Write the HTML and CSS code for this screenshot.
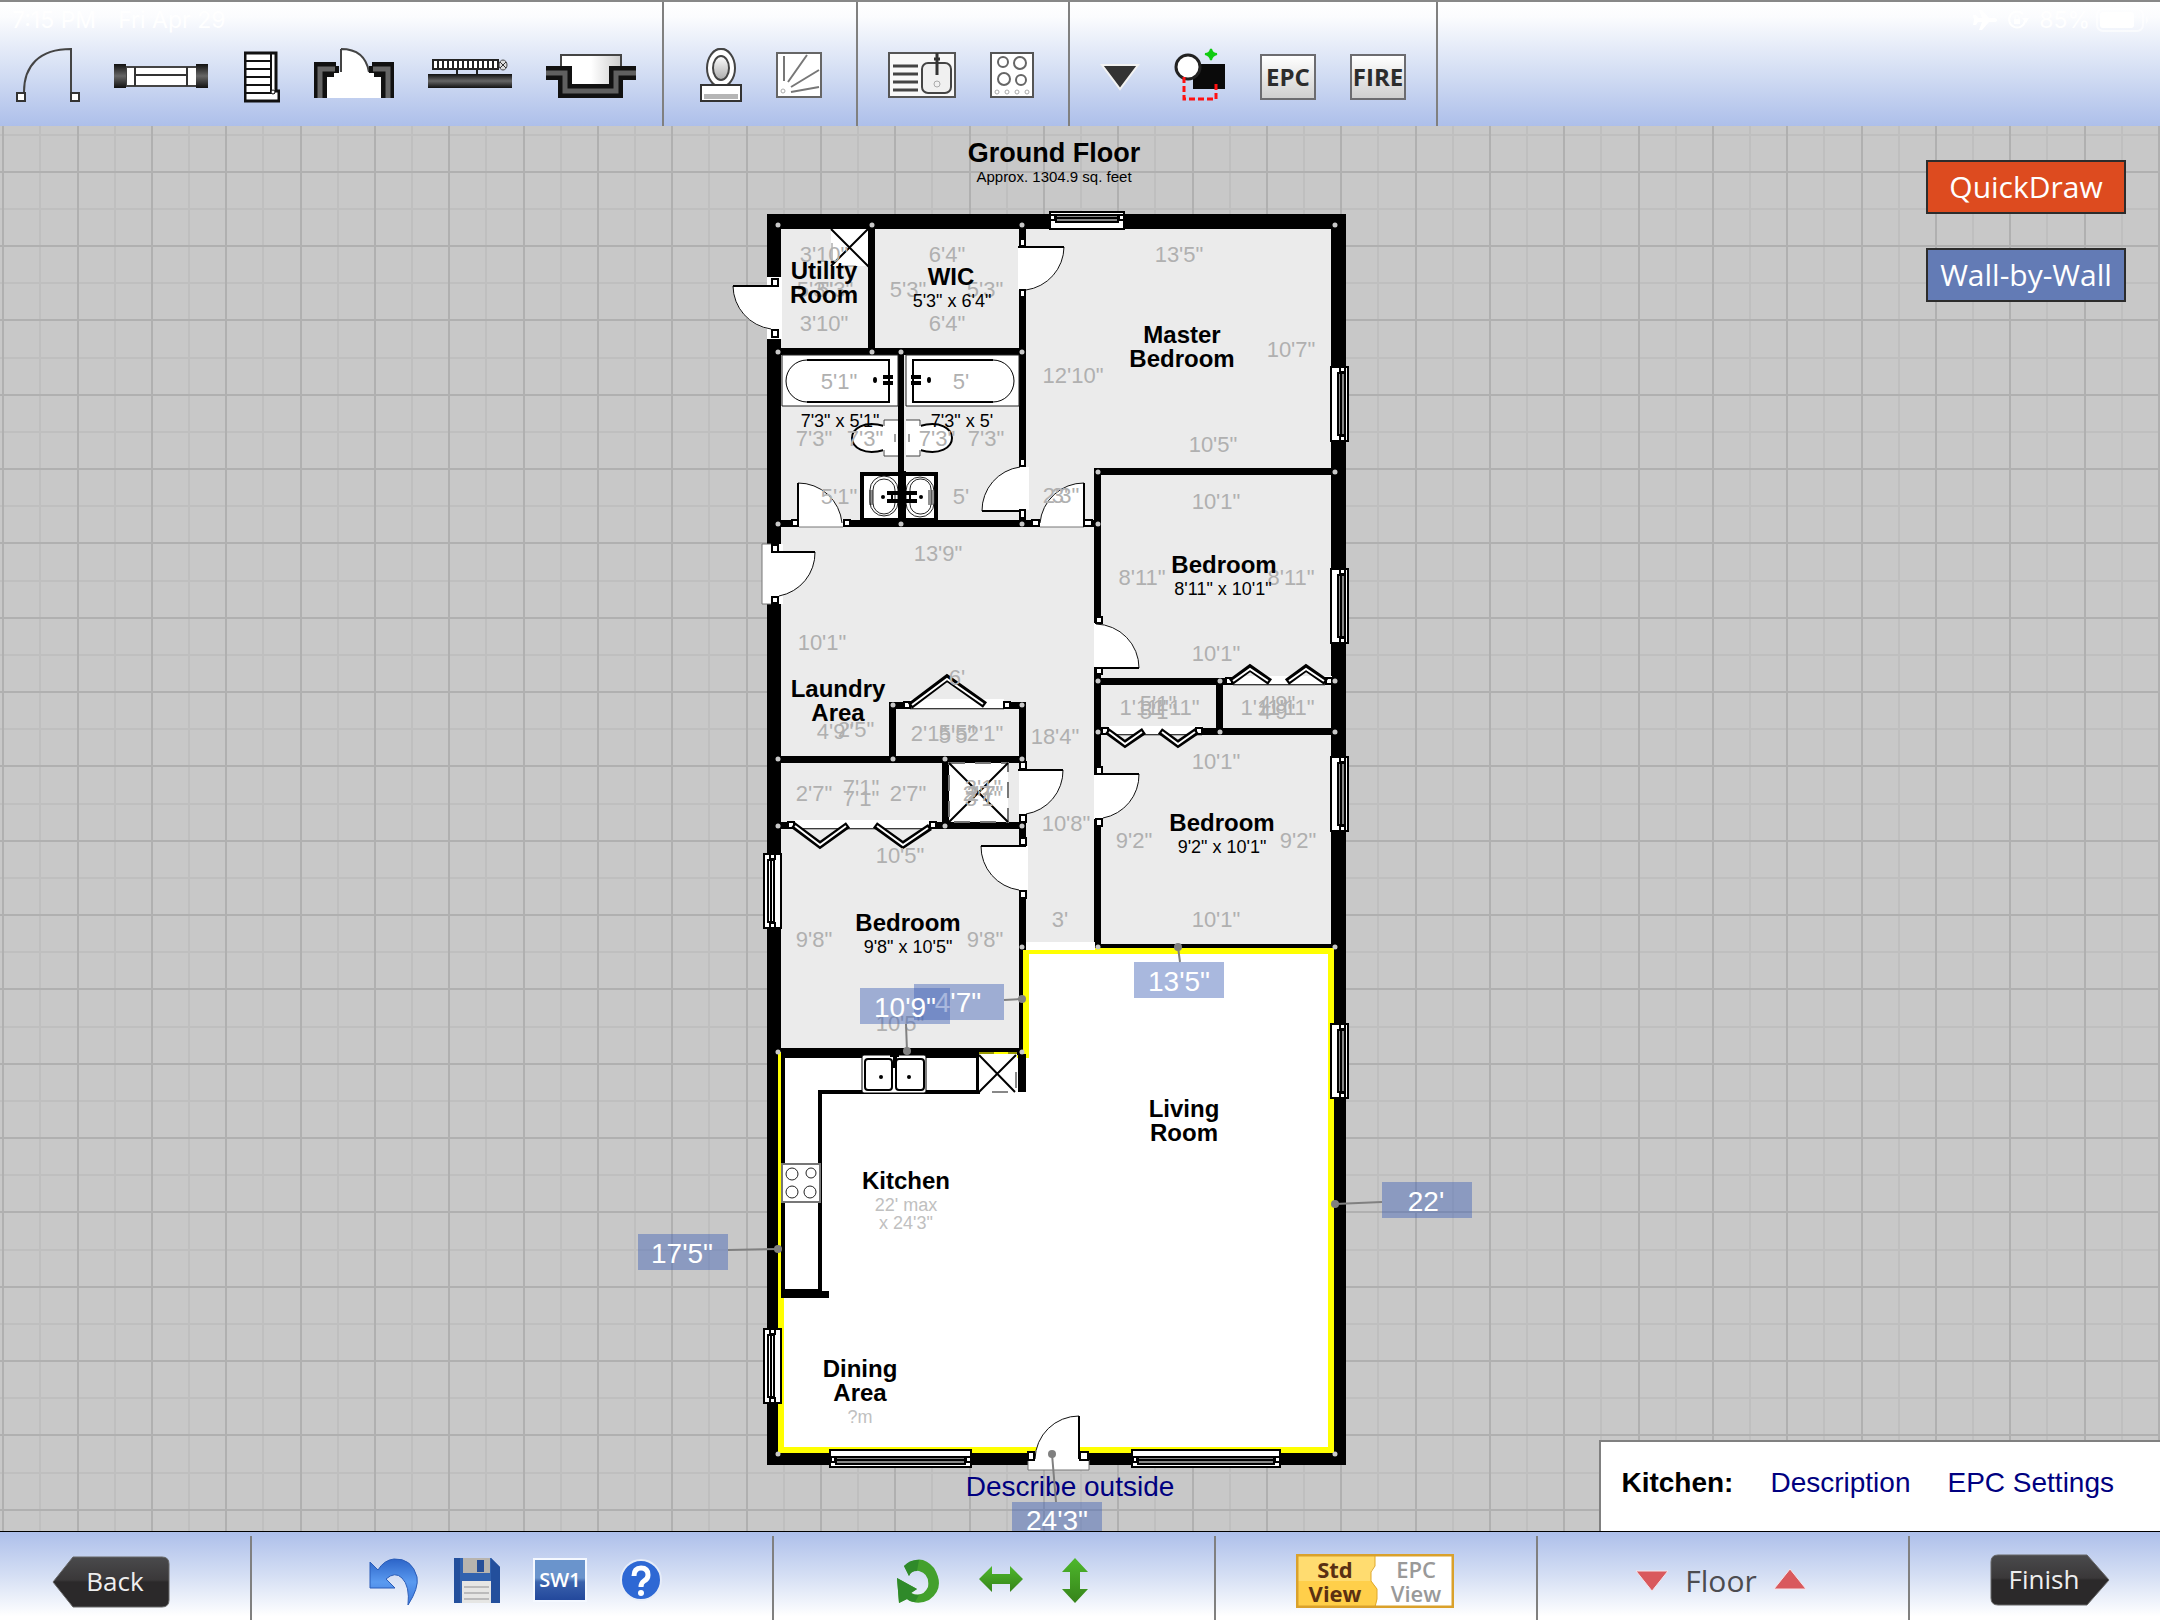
FILE: index.html
```html
<!DOCTYPE html>
<html lang="en">
<head>
<meta charset="utf-8">
<title>Ground Floor</title>
<link rel="stylesheet" href="styles.css">
</head>
<body>
<div class="app">
  <header class="topbar">
    <div class="status">
      <span>7:15 PM</span><span class="date">Fri Apr 29</span>
      <svg class="airplane" width="24" height="20" viewBox="0 0 24 20"><path fill="#fff" d="M24 10q0 2-3 2h-5l-7 8H6l3-8H5l-2 3H0l1-5-1-5h3l2 3h4L6 0h3l7 8h5q3 0 3 2z"/></svg>
      <svg width="22" height="20" viewBox="0 0 22 20"><path fill="none" stroke="#fff" stroke-width="2" d="M16 4a8 8 0 1 0 2 7"/><path fill="#fff" d="M15 8h7l-3 5zM7 9h6v5H7z"/><path fill="none" stroke="#fff" stroke-width="1" d="M8 9V7a2 2 0 0 1 4 0v2"/></svg>
      <span>85%</span>
      <svg class="battery" width="54" height="24" viewBox="0 0 54 24"><rect x="1" y="1" width="46" height="22" rx="6" fill="none" stroke="#fff" stroke-opacity=".6" stroke-width="2"/><rect x="4" y="4" width="34" height="16" rx="3" fill="#fff"/><path d="M50 8q4 4 0 8z" fill="#fff" fill-opacity=".6"/></svg>
    </div>
    <div class="tools openings">
      <button aria-label="Door"><svg width="64" height="56" viewBox="16 48 64 56"><path d="M24 92C24 66 39 49 71 49V93" fill="none" stroke="#444" stroke-width="2"/><path d="M17 93h8v8h-8zM71 93h8v8h-8z" fill="#fff" stroke="#333" stroke-width="2"/></svg></button>
      <button aria-label="Window"><svg width="96" height="56" viewBox="114 48 96 56"><defs><linearGradient id="gd" x1="0" y1="0" x2="0" y2="1"><stop offset="0" stop-color="#111"/><stop offset=".5" stop-color="#666"/><stop offset="1" stop-color="#111"/></linearGradient></defs><path d="M126 67h72v19h-72z" fill="#fff" stroke="#444" stroke-width="2"/><path d="M135 67v19M187 67v19M135 75h52" stroke="#333" stroke-width="2"/><path d="M114 64h12v24h-12zM196 64h12v24h-12z" fill="url(#gd)"/></svg></button>
      <button aria-label="Stairs"><svg width="36" height="56" viewBox="244 48 36 56"><path d="M245 53h31v38h3v10h-34z" fill="#fff" stroke="#111" stroke-width="3"/><path d="M245 61h26M245 69h26M245 77h26M245 85h26M245 93h27" stroke="#111" stroke-width="2"/><path d="M271 53v40h4" stroke="#111" stroke-width="2" fill="none"/><circle cx="273" cy="92" r="2" fill="#fff" stroke="#111"/></svg></button>
      <button aria-label="Doorway"><svg width="80" height="56" viewBox="314 48 80 56"><path d="M327 98V75l14-4V50q24 0 27 22l14 3v23z" fill="#fff"/><path d="M341 72V49M341 49q24 0 28 23" fill="none" stroke="#444" stroke-width="2"/><path d="M314 98V62h22v4h3v7h-5v4h-7v21zM394 98V62h-22v4h-3v7h5v4h7v21z" fill="#111"/><path d="M320 98V69h15M388 98V69h-15" fill="none" stroke="#666" stroke-width="5"/></svg></button>
      <button aria-label="Railing"><svg width="84" height="56" viewBox="428 48 84 56"><path d="M433 60h65v9h-65z" fill="#fff" stroke="#222" stroke-width="2"/><path d="M438 60v9M443 60v9M448 60v9M453 60v9M458 60v9M463 60v9M468 60v9M473 60v9M478 60v9M483 60v9M488 60v9M493 60v9M457 69v5M477 69v5" stroke="#222" stroke-width="2"/><ellipse cx="503" cy="65" rx="4" ry="5" fill="#ddd" stroke="#444"/><path d="M500 62l6 6m0-6l-6 6" stroke="#333"/><path d="M428 74h84v14h-84z" fill="url(#gd)"/></svg></button>
      <button aria-label="Bay"><svg width="90" height="56" viewBox="546 48 90 56"><defs><linearGradient id="gb"><stop offset=".5" stop-color="#fff"/><stop offset="1" stop-color="#ccc"/></linearGradient></defs><path d="M561 55h60v30h-60z" fill="url(#gb)" stroke="#444" stroke-width="2"/><path d="M546 73h19v18h51V73h20" fill="none" stroke="#111" stroke-width="14"/><path d="M546 73h19v18h51V73h20" fill="none" stroke="#606060" stroke-width="5"/></svg></button>
    </div>
    <div class="tools">
      <button aria-label="Toilet"><svg width="42" height="56" viewBox="700 48 42 56"><defs><linearGradient id="gt" x1="0" y1="0" x2="0" y2="1"><stop offset="0" stop-color="#fff"/><stop offset="1" stop-color="#aaa"/></linearGradient></defs><path d="M713 85q-9-36 8-36t8 36z" fill="#fff" stroke="#444" stroke-width="2"/><ellipse cx="721" cy="68" rx="14" ry="19" fill="#fff" stroke="#444" stroke-width="2"/><ellipse cx="721" cy="68" rx="8" ry="12" fill="url(#gt)" stroke="#444" stroke-width="2"/><path d="M701 85h40v16h-40z" fill="#fff" stroke="#333" stroke-width="2"/><path d="M704 94h34v5h-34z" fill="#b5b5b5"/></svg></button>
      <button aria-label="Shower"><svg width="46" height="56" viewBox="776 48 46 56"><path d="M777 53h44v44h-44z" fill="#fff" stroke="#666" stroke-width="2"/><path d="M784 81V56M788 82l19-27M791 87l28-17M791 92l28-5" stroke="#777" stroke-width="2"/><circle cx="783" cy="91" r="2" fill="none" stroke="#aaa"/></svg></button>
    </div>
    <div class="tools">
      <button aria-label="Sink"><svg width="68" height="56" viewBox="888 48 68 56"><path d="M889 53h66v44h-66z" fill="#f8f8f8" stroke="#555" stroke-width="2"/><path d="M893 66h25M893 74h25M893 82h25M893 90h25" stroke="#444" stroke-width="3"/><rect x="922" y="63" width="29" height="30" rx="6" fill="#f0f0f0" stroke="#444" stroke-width="2"/><path d="M937 53v22M934 59h6" stroke="#333" stroke-width="3"/><circle cx="937" cy="84" r="3" fill="none" stroke="#aaa"/></svg></button>
      <button aria-label="Hob"><svg width="44" height="56" viewBox="990 48 44 56"><path d="M991 53h42v44h-42z" fill="#fff" stroke="#555" stroke-width="2"/><g fill="none" stroke="#666" stroke-width="2"><circle cx="1003" cy="62" r="5"/><circle cx="1020" cy="63" r="6"/><circle cx="1004" cy="79" r="6"/><circle cx="1021" cy="80" r="5"/></g><g fill="none" stroke="#aaa"><circle cx="997" cy="92" r="2"/><circle cx="1007" cy="92" r="2"/><circle cx="1017" cy="92" r="2"/><circle cx="1027" cy="92" r="2"/></g></svg></button>
    </div>
    <div class="tools">
      <button aria-label="More"><svg width="40" height="56" viewBox="1100 48 40 56"><path d="M1102 65h36l-18 24z" fill="#333" stroke="#f2f2f2" stroke-width="2"/></svg></button>
      <button aria-label="Add shape"><svg width="52" height="56" viewBox="1174 48 52 56"><path d="M1193 64h32v25h-32z" fill="#0a0a0a"/><circle cx="1188" cy="67" r="12" fill="#fff" stroke="#222" stroke-width="3"/><path d="M1184 77v22h32V84" fill="none" stroke="#f11" stroke-width="3" stroke-dasharray="6 3"/><path d="M1211 49q1 5 6 5-5 1-6 6-1-5-6-6 5 0 6-5z" fill="#1c1" stroke="#1c1" stroke-width="2"/></svg></button>
      <button class="badge">EPC</button>
      <button class="badge">FIRE</button>
    </div>
  </header>

  <main class="canvas">
    <svg class="plan" width="900" height="1405" viewBox="600 126 900 1405">
      <defs>
        <g id="win"><path d="M1 1h17v74H1z" fill="#fff" stroke="#000" stroke-width="2"/><path d="M7 6h9v64H7z" fill="#000"/><path d="M9 8h1v60H9zM12 8h2v60h-2z" fill="#888"/><path d="M10 1h5v5h-5zM10 70h5v5h-5z" fill="#fff" stroke="#000" stroke-width="2"/></g>
        <g id="winl"><path d="M1 1h17v74H1z" fill="#fff" stroke="#000" stroke-width="2"/><path d="M4 6h8v64H4z" fill="#000"/><path d="M6 8h1v60H6zM9 8h1v60H9z" fill="#fff"/><path d="M7 1h5v5H7zM7 70h5v5H7z" fill="#fff" stroke="#000" stroke-width="2"/></g>
      </defs>
      <text class="title" x="1054" y="162">Ground Floor</text>
      <text class="area" x="1054" y="182">Approx. 1304.9 sq. feet</text>

      <path class="wall" d="M767 214h579v1251H767z"/>
      <path class="room" d="M781 229h550v722H1026v102H781z"/>
      <path d="M1026 951h305v499H781V1055h245z" fill="#fff" stroke="#ff0" stroke-width="6"/>

      <g class="wall">
        <path d="M868 229h7v122h-7zM781 348h240v7H781zM898 351h6v171h-6zM1019 229h7v298h-7zM781 520h318v7H781z"/>
        <path d="M1094 468h237v7h-237zM1094 468h7v480h-7zM1094 678h237v7h-237zM1216 678h7v57h-7zM1094 728h237v7h-237zM1097 944h234v4h-234z"/>
        <path d="M889 702h137v7H889zM889 702h7v58h-7zM1019 702h7v350h-7zM781 756h245v7H781zM942 756h7v73h-7zM781 822h245v7H781zM781 1048h245v7H781z"/>
      </g>
      <path d="M778 1055h2v245h-2zM1023 950h6v108h-6z" fill="#ff0"/>
      <path d="M1019 950h4v102h-4z" class="wall"/>
      <path d="M1026 942h69v8h-69z" fill="#fff"/>

      <!-- kitchen counter -->
      <path d="M783 1056h195v36H820v199H783z" fill="#fff" stroke="#000" stroke-width="4"/>
      <path class="wall" d="M781 1290h41v1h7v7h-48zM1018 1054h8v38h-8zM781 1050h198v6H781z"/>
      <path d="M979 1054h38v38h-38z" fill="#fff"/><path d="M979 1053h38" stroke="#990" stroke-width="2"/><path d="M994 1053h14" stroke="#ff0" stroke-width="2"/>
      <path d="M979 1055l36 37M1016 1055l-37 37M978 1055v39" class="ln"/>
      <path d="M992 1092h16M1016 1072v16" stroke="#888" stroke-width="2"/>
      <path d="M782 1164h38v38h-38z" fill="#fff" stroke="#777" stroke-width="2"/>
      <g class="thin"><circle cx="792" cy="1174" r="6"/><circle cx="811" cy="1173" r="5"/><circle cx="792" cy="1192" r="6"/><circle cx="810" cy="1192" r="6"/></g>
      <rect x="862" y="1055" width="64" height="38" rx="2" fill="#fff" stroke="#000"/>
      <g fill="#fff" stroke="#000" stroke-width="2"><rect x="865" y="1059" width="27" height="31" rx="3"/><rect x="896" y="1059" width="28" height="31" rx="3"/></g>
      <path d="M893 1055h4v13h-4zM890 1055h9v2h-9z"/><circle cx="881" cy="1077" r="2"/><circle cx="909" cy="1077" r="2"/>

      <!-- hatches -->
      <path d="M831 229h37v37h-37z" fill="#fff"/><path d="M831 229l38 38M868 229l-37 37" class="ln"/>
      <path d="M832 243v18M842 266h14" stroke="#888"/>
      <path d="M949 763h59v59h-59z" fill="#fff" stroke="#777" stroke-width="2" stroke-dasharray="16 10"/><path d="M949 763l59 59M1008 763l-59 59" class="ln"/>

      <!-- bathroom fittings -->
      <g class="thin"><path d="M782 355h116v51H782zM906 355h113v51H906z"/></g>
      <g fill="#fff" stroke="#000" stroke-width="2"><path d="M889 360v42h-82a21 21 0 0 1 0-42z" stroke-width="1"/><path d="M807 360h82v42h-82" fill="none"/><path d="M913 360v42h80a21 21 0 0 0 0-42z" stroke-width="1"/><path d="M993 360h-80v42h80" fill="none"/></g>
      <path d="M883 375h10v4h-10zM883 381h10v4h-10zM911 375h10v4h-10zM911 381h10v4h-10z"/>
      <ellipse cx="875" cy="380" rx="2" ry="3"/><ellipse cx="929" cy="380" rx="2" ry="3"/>
      <path d="M884 426c-20-6-32 3-32 12s12 18 32 12z" fill="#fff" stroke="#000" stroke-width="2"/><path d="M920 426c20-6 32 3 32 12s-12 18-32 12z" fill="#fff" stroke="#000" stroke-width="2"/>
      <path d="M883 420h15v36h-15zM906 420h15v36h-15z" fill="#fff"/><path d="M898 420h-14v6M884 450v6h14M906 420h14v6M920 450v6h-14M895 434v8M909 434v8" stroke="#444" fill="none"/>
      <path d="M860 472h78v48h-78z"/><path d="M864 476h34v42h-34zM904 476h30v42h-30z" fill="#fff"/>
      <g class="thin"><rect x="870" y="476" width="28" height="40" rx="14"/><rect x="873" y="479" width="22" height="35" rx="11"/><rect x="906" y="477" width="28" height="40" rx="14"/><rect x="910" y="479" width="21" height="35" rx="10"/><path d="M870 490v15M872 490v15M929 490v15M932 490v15"/></g>
      <path class="wall" d="M898 471h8v50h-8z"/><circle cx="883" cy="497" r="2"/><circle cx="921" cy="497" r="2"/><path d="M887 491h30v4h-30zM887 499h30v4h-30z"/><path d="M891 491h2v12h-2zM909 491h2v12h-2z"/>

      <!-- doors -->
      <g fill="#fff">
        <path d="M767 277h15v62h-15zM762 544h21v60h-21zM1018 246h8v44h-8zM1019 467h10v43h-10zM799 519h44v8h-44zM1040 519h44v8h-44zM1019 770h8v44h-8zM1019 846h9v44h-9zM1094 623h8v45h-8zM1094 774h8v44h-8z"/>
        <path d="M910 699h94v9h-94zM794 820h136v8H794zM1233 676h99v8h-99zM1108 726h94v8h-94zM1028 1451h61v19h-61z"/>
        <path d="M778 286h-45a44 44 0 0 0 45 44zM1019 247h45a44 44 0 0 1-45 44zM1020 511h-38a44 44 0 0 1 44-44v44zM798 523v-40a44 44 0 0 1 44 40zM1084 523v-40a44 44 0 0 0-44 40zM771 552h44a44 44 0 0 1-44 44zM1019 770h44a44 44 0 0 1-44 44zM1026 846h-45a44 44 0 0 0 45 44zM1094 668h45a44 44 0 0 0-45-45zM1094 774h45a44 44 0 0 1-45 45zM1079 1459v-43a44 44 0 0 0-44 43z"/>
      </g>
      <g class="arc">
        <path d="M733 286a44 44 0 0 0 38 43M1064 247a44 44 0 0 1-38 43M982 511a44 44 0 0 1 38-44M798 483a44 44 0 0 1 44 40M1084 483a44 44 0 0 0-44 40M815 552a44 44 0 0 1-36 44M1063 770a44 44 0 0 1-37 44M981 846a44 44 0 0 0 38 44M1139 668a44 44 0 0 0-43-44M1139 774a44 44 0 0 1-36 44M1079 1416a44 44 0 0 0-44 43"/>
        <path d="M771 544h-9v60h9M1028 1460v10h61v-10M910 709h94M794 829h136M1233 685h92M1108 735h94M799 527h44M1040 527h44" stroke="#777"/>
      </g>
      <path class="ln" d="M733 286h45M1018 247h46M982 511h38M798 483v40M1084 483v40M771 552h44M1018 770h45M981 846h45M1094 668h45M1094 774h45M1079 1416v43"/>
      <g fill="#fff" stroke="#000" stroke-width="2">
        <path d="M772 279h6v7h-6zM772 330h6v7h-6zM1020 239h5v7h-5zM1020 290h5v7h-5zM1020 459h5v7h-5zM1020 510h5v8h-5zM792 520h6v6h-6zM844 520h6v6h-6zM1032 520h7v6h-7zM1084 520h8v6h-8z"/>
        <path d="M772 545h6v7h-6zM772 597h6v6h-6zM1020 762h6v7h-6zM1020 815h6v7h-6zM1020 838h6v7h-6zM1020 891h6v7h-6zM1096 617h6v6h-6zM1096 668h6v6h-6zM1096 767h6v7h-6zM1096 819h6v7h-6zM1028 1452h6v8h-6zM1080 1452h8v8h-8z"/>
        <path d="M904 702h6v6h-6zM1004 702h6v6h-6zM788 822h6v6h-6zM930 822h6v6h-6zM1226 678h6v6h-6zM1326 678h6v6h-6zM1102 728h6v6h-6zM1196 728h6v6h-6z"/>
      </g>
      <path d="M910 706l37-28 38 27M793 825l27 20 28-20M875 825l28 20 27-18M1231 682l19-14 20 14M1287 682l19-14 20 14M1107 731l18 13 19-13M1160 731l18 13 19-13" fill="none" stroke="#000" stroke-width="7"/>
      <path d="M912 705l35-26 36 25M795 826l25 19 26-19M877 826l26 19 25-17M1233 681l17-12 18 12M1289 681l17-12 18 12M1109 732l16 12 17-12M1162 732l16 12 17-12" fill="none" stroke="#fff" stroke-width="2"/>

      <!-- windows -->
      <use href="#win" x="1330" y="366"/><use href="#win" x="1330" y="568"/><use href="#win" x="1330" y="756"/><use href="#win" x="1330" y="1023"/>
      <use href="#winl" x="763" y="853"/><use href="#winl" x="763" y="1328"/>
      <path d="M1050 212h74v17h-74z" fill="#fff" stroke="#000" stroke-width="2"/><path d="M1055 214h64v9h-64z"/><path d="M1057 216h60v1h-60zM1057 219h60v2h-60z" fill="#888"/>
      <path d="M830 1450h141v17H830zM1132 1450h148v17h-148z" fill="#fff" stroke="#000" stroke-width="2"/><path d="M835 1456h131v9H835zM1137 1456h138v9h-138z"/><path d="M837 1458h127v1H837zM837 1461h127v2H837zM1139 1458h134v1h-134zM1139 1461h134v2h-134z" fill="#888"/>
      <path d="M1050 215h5v5h-5zM1119 215h5v5h-5zM831 1457h4v5h-4zM966 1457h5v5h-5zM1133 1457h4v5h-4zM1275 1457h5v5h-5z" fill="#fff" stroke="#000" stroke-width="2"/>

      <path class="nodes" d="M778 225h0M872 225h0M1022 225h0M1335 225h0M778 352h0M872 352h0M901 352h0M1022 352h0M778 524h0M901 524h0M1022 524h0M1098 472h0M1335 472h0M1098 524h0M893 705h0M1022 705h0M778 759h0M893 759h0M945 759h0M1022 759h0M778 826h0M945 826h0M1022 826h0M1098 681h0M1220 681h0M1335 681h0M1098 732h0M1220 732h0M1335 732h0M1022 947h0M1098 947h0M1335 947h0M778 1052h0M1022 1052h0M778 1454h0M1335 1454h0"/>

      <g class="dim">
        <text x="824" y="262">3'10"</text><text x="815" y="297">5'3"</text><text x="835" y="297">5'3"</text><text x="824" y="331">3'10"</text>
        <text x="947" y="262">6'4"</text><text x="908" y="297">5'3"</text><text x="985" y="297">5'3"</text><text x="947" y="331">6'4"</text>
        <text x="839" y="389">5'1"</text><text x="961" y="389">5'</text><text x="814" y="446">7'3"</text><text x="865" y="446">7'3"</text><text x="937" y="446">7'3"</text><text x="986" y="446">7'3"</text><text x="839" y="504">5'1"</text><text x="961" y="504">5'</text>
        <text x="1179" y="262">13'5"</text><text x="1291" y="357">10'7"</text><text x="1073" y="383">12'10"</text><text x="1213" y="452">10'5"</text><text x="1061" y="503">2'3"</text><text x="1060" y="503">3'</text>
        <text x="1216" y="509">10'1"</text><text x="1142" y="585">8'11"</text><text x="1291" y="585">8'11"</text><text x="1216" y="661">10'1"</text>
        <text x="1143" y="715">1'11"</text><text x="1176" y="715">1'11"</text><text x="1158" y="711">5'1"</text><text x="1158" y="719">5'1"</text>
        <text x="1264" y="715">1'11"</text><text x="1291" y="715">1'11"</text><text x="1277" y="711">4'9"</text><text x="1277" y="719">4'9"</text>
        <text x="1216" y="769">10'1"</text><text x="1134" y="848">9'2"</text><text x="1298" y="848">9'2"</text><text x="1216" y="927">10'1"</text>
        <text x="938" y="561">13'9"</text><text x="822" y="650">10'1"</text><text x="957" y="685">6'</text><text x="835" y="739">4'9"</text><text x="856" y="737">2'5"</text>
        <text x="929" y="741">2'1"</text><text x="957" y="740">5'5"</text><text x="957" y="743">5'5"</text><text x="985" y="741">2'1"</text><text x="1055" y="744">18'4"</text>
        <text x="814" y="801">2'7"</text><text x="861" y="795">7'1"</text><text x="861" y="806">7'1"</text><text x="908" y="801">2'7"</text>
        <text x="983" y="795">3'1"</text><text x="981" y="801">2'7"</text><text x="985" y="801">2'7"</text><text x="983" y="806">3'1"</text>
        <text x="1066" y="831">10'8"</text><text x="900" y="863">10'5"</text><text x="1060" y="927">3'</text><text x="814" y="947">9'8"</text><text x="985" y="947">9'8"</text><text x="900" y="1031">10'5"</text>
      </g>
      <g class="name">
        <text x="824" y="279">Utility</text><text x="824" y="303">Room</text><text x="951" y="285">WIC</text>
        <text x="1182" y="343">Master</text><text x="1182" y="367">Bedroom</text><text x="1224" y="573">Bedroom</text><text x="1222" y="831">Bedroom</text>
        <text x="838" y="697">Laundry</text><text x="838" y="721">Area</text><text x="908" y="931">Bedroom</text><text x="906" y="1189">Kitchen</text>
        <text x="1184" y="1117">Living</text><text x="1184" y="1141">Room</text><text x="860" y="1377">Dining</text><text x="860" y="1401">Area</text>
      </g>
      <g class="size">
        <text x="952" y="307">5'3" x 6'4"</text><text x="840" y="427">7'3" x 5'1"</text><text x="962" y="427">7'3" x 5'</text><text x="1223" y="595">8'11" x 10'1"</text><text x="1222" y="853">9'2" x 10'1"</text><text x="908" y="953">9'8" x 10'5"</text>
        <text class="faint" x="906" y="1211">22' max</text><text class="faint" x="906" y="1229">x 24'3"</text><text class="faint" x="860" y="1423">?m</text>
      </g>

      <a href="#outside"><text class="outside" x="1070" y="1496">Describe outside</text></a>
      <path d="M1178 947l2 15M1022 999l-18 1M907 1051l-1-27M1335 1204l47-2M778 1249l-50 1M1052 1454l4 48" stroke="#808080" stroke-width="2"/>
      <g fill="#808080"><circle cx="1178" cy="947" r="4"/><circle cx="1022" cy="999" r="4"/><circle cx="907" cy="1051" r="4"/><circle cx="1335" cy="1204" r="4"/><circle cx="778" cy="1249" r="4"/><circle cx="1052" cy="1454" r="4"/></g>
      <g class="tag">
        <rect x="1134" y="962" width="90" height="36"/><text x="1179" y="991">13'5"</text>
        <rect x="914" y="984" width="90" height="36"/><text x="958" y="1012">4'7"</text>
        <rect x="860" y="988" width="90" height="36"/><text x="905" y="1017">10'9"</text>
        <rect x="1382" y="1182" width="90" height="36"/><text x="1426" y="1211">22'</text>
        <rect x="638" y="1234" width="90" height="36"/><text x="682" y="1263">17'5"</text>
        <rect x="1012" y="1502" width="90" height="36"/><text x="1057" y="1530">24'3"</text>
      </g>
    </svg>

    <div class="modes">
      <button class="mode quick">QuickDraw</button>
      <button class="mode walls">Wall-by-Wall</button>
    </div>
    <aside class="panel">
      <strong>Kitchen:</strong><a href="#description">Description</a><a href="#epc">EPC Settings</a>
    </aside>
  </main>

  <footer class="bottombar">
    <div class="cell back">
      <button class="nav"><svg width="118" height="52" viewBox="0 0 118 52"><defs><linearGradient id="gn" x1="0" y1="0" x2="0" y2="1"><stop offset="0" stop-color="#4a4a4c"/><stop offset=".46" stop-color="#3a3839"/><stop offset=".5" stop-color="#2b292a"/><stop offset="1" stop-color="#2b292a"/></linearGradient></defs><path d="M21 1h89q7 0 7 7v36q0 7-7 7H21L1 26z" fill="url(#gn)" stroke="#666"/><text x="63" y="35">Back</text></svg></button>
    </div>
    <div class="cell edit">
      <button aria-label="Undo"><svg width="52" height="48" viewBox="0 0 52 48"><defs><linearGradient id="gu" x1="0" y1="0" x2="0" y2="1"><stop offset="0" stop-color="#2c64c8"/><stop offset=".5" stop-color="#5a9af0"/><stop offset="1" stop-color="#3d78dc"/></linearGradient></defs><path d="M1 4v26h25l-9-9Q26 13 33 20q8 8 6 27 11-17 9-28Q43 0 25 1 15 2 9 12z" fill="url(#gu)" stroke="#2a5cb8"/></svg></button>
      <button aria-label="Save"><svg width="48" height="48" viewBox="0 0 48 48"><path d="M1 0h37l9 9v36H1z" fill="#3262ae"/><path d="M1 0h6v45H1zM38 0l9 9v36h-9z" fill="#234f9c"/><path d="M10 0h27v15H10z" fill="#b8b4ae"/><path d="M24 2h7v12h-7z" fill="#274f98"/><path d="M9 23h29v22H9z" fill="#e6e6e4"/><path d="M11 29h25M11 35h25M11 41h25" stroke="#bbb" stroke-width="2"/></svg></button>
      <button class="sw">SW1</button>
      <button aria-label="Help"><svg width="44" height="48" viewBox="0 0 44 48"><circle cx="22" cy="22" r="20" fill="#2e68d4" stroke="#e6ecf8" stroke-width="2"/><path d="M15 18q0-8 7-8t7 7q0 4-4 6-3 2-3 6" fill="none" stroke="#fff" stroke-width="5"/><circle cx="22" cy="35" r="3" fill="#fff"/></svg></button>
    </div>
    <div class="cell turn">
      <button aria-label="Rotate"><svg width="46" height="48" viewBox="0 0 46 48"><path d="M9 8Q26-6 39 10q12 20-5 32-12 6-22-1l-8 4-2-25 20 11-6 4q12 5 17-6 2-13-9-16-8-1-10 5z" fill="#43a02c"/><path d="M2 20l20 11-6 4q4 3 8 2l-4 7q-5 0-8-3l-8 4zM9 8q6-7 15-6l-2 11q-6 0-8 5z" fill="#2f8a2a"/></svg></button>
      <button aria-label="Flip horizontally"><svg width="44" height="48" viewBox="0 0 44 48"><defs><linearGradient id="gg" x1="0" y1="0" x2="0" y2="1"><stop offset="0" stop-color="#4eb82c"/><stop offset="1" stop-color="#36831a"/></linearGradient></defs><path d="M0 21L13 8v8h18V8l13 13-13 13v-8H13v8z" fill="url(#gg)"/></svg></button>
      <button aria-label="Flip vertically"><svg width="28" height="48" viewBox="0 0 28 48"><path d="M14 0l13 14h-8v17h8L14 45 1 31h8V14H1z" fill="url(#gg)"/></svg></button>
    </div>
    <div class="cell view">
      <button aria-label="Switch view"><svg width="158" height="54" viewBox="0 0 158 54"><path d="M1 1h156v52H1z" fill="#fff"/><path d="M1 1h78v11l-4 5v10l6 8v10l-2 8H1z" fill="#ffdc70"/><path d="M1 27h74l6 8v10l-2 8H1z" fill="#ffcf4a"/><path d="M79 1v11l-4 6v9l6 8v10l-2 8" fill="none" stroke="#e0a828"/><path d="M1 1h156v52H1z" fill="none" stroke="#daa12b" stroke-width="3"/><g class="on"><text x="39" y="24">Std</text><text x="39" y="48">View</text></g><g class="off"><text x="120" y="24">EPC</text><text x="120" y="48">View</text></g></svg></button>
    </div>
    <div class="cell floor">
      <button aria-label="Floor down"><svg width="34" height="24" viewBox="0 0 34 24"><path d="M1 3h32L17 23z" fill="#d9595d" stroke="#f5e4ea"/></svg></button>
      <span>Floor</span>
      <button aria-label="Floor up"><svg width="34" height="24" viewBox="0 0 34 24"><path d="M1 21h32L17 1z" fill="#d9595d" stroke="#f5e4ea"/></svg></button>
    </div>
    <div class="cell finish">
      <button class="nav"><svg width="120" height="52" viewBox="0 0 120 52"><path d="M97 1H8Q1 1 1 8v36q0 7 7 7h89l22-25z" fill="url(#gn)" stroke="#666"/><text x="54" y="35">Finish</text></svg></button>
    </div>
  </footer>
</div>
</body>
</html>
```
FILE: styles.css
```css
* { box-sizing: border-box; }
body { margin: 0; font-family: "Liberation Sans", Arial, sans-serif; }
button { display: block; margin: 0; padding: 0; border: 0; background: none; font: inherit; color: inherit; cursor: pointer; }
svg { display: block; }

.app { display: flex; flex-direction: column; height: 100vh; overflow: hidden; }

/* top toolbar */
.topbar {
  position: relative;
  display: flex;
  flex: none;
  height: 126px;
  border-top: 2px solid #888;
  background: linear-gradient(#fff, #fbfcfe 12%, #d5dff4 55%, #adbfea);
}
.tools { display: flex; align-items: flex-start; gap: 34px; padding: 46px 34px 0 30px; border-right: 2px solid #808080; }
.tools.openings { padding: 46px 26px 0 16px; }
.tools:nth-child(3) { padding-left: 36px; }
.tools:last-child { padding-right: 30px; }
.badge {
  width: 56px;
  height: 46px;
  margin-top: 6px;
  border: 2px solid #6c6c70;
  background: linear-gradient(#fff, #cfcfcf);
  color: #2c2c2c;
  font: 700 24px/42px "Open Sans", sans-serif;
  text-align: center;
  white-space: nowrap;
}
.status {
  position: absolute;
  top: 4px;
  left: 12px;
  right: 10px;
  display: flex;
  align-items: center;
  gap: 10px;
  color: #fff;
  font: 400 23px/28px Inter, sans-serif;
}
.date { margin: 0 auto 0 12px; }
.battery { margin-left: -4px; }

/* drawing surface */
.canvas {
  position: relative;
  flex: 1;
  min-height: 0;
  overflow: hidden;
  background-color: #c8c8c8;
  background-image:
    linear-gradient(90deg, #b0b0b0 2px, transparent 2px 75px, #b0b0b0 75px 77px, transparent 77px 149px, #b0b0b0 149px 151px, transparent 151px),
    linear-gradient(#b0b0b0 2px, transparent 2px 74px, #b0b0b0 74px 76px, transparent 76px 148px, #b0b0b0 148px 150px, transparent 150px),
    linear-gradient(90deg, transparent 37px, #bfbfbf 37px 39px, transparent 39px 112px, #bfbfbf 112px 114px, transparent 114px 186px, #bfbfbf 186px 188px, transparent 188px),
    linear-gradient(transparent 37px, #bfbfbf 37px 39px, transparent 39px 111px, #bfbfbf 111px 113px, transparent 113px 186px, #bfbfbf 186px 188px, transparent 188px);
  background-size: 223px 223px;
  background-position: 2px 45px;
}
.plan { position: absolute; top: 0; left: calc(50% - 480px); }
.plan text { text-anchor: middle; }
.wall { fill: #000; }
.room { fill: #ebebeb; }
.ln { fill: none; stroke: #000; stroke-width: 2px; }
.thin { fill: #fff; stroke: #222; stroke-width: 1px; }
.arc { fill: none; stroke: #111; stroke-width: 1px; }
.nodes { stroke: #c8c8c8; stroke-width: 5px; stroke-linecap: round; }
.title { font-size: 27px; font-weight: 700; }
.area { font-size: 15px; }
.dim { font-size: 22px; fill: #b0b0b0; }
.name { font-size: 24px; font-weight: 700; }
.size { font-size: 18px; }
.size .faint { fill: #c0c0c0; }
.outside { font-size: 28px; fill: #000080; }
.tag { font-size: 28px; fill: #fff; }
.tag rect { fill: rgb(64 98 182 / 45%); }

.modes { position: absolute; top: 34px; right: 34px; display: flex; flex-direction: column; gap: 34px; }
.mode {
  width: 200px;
  height: 54px;
  border: 2px solid #2c2c2c;
  color: #fff;
  font: 400 30px/48px "Open Sans", sans-serif;
}
.quick { background: #dd4b1f; }
.walls { background: #637bb5; }

.panel {
  position: absolute;
  right: 0;
  bottom: 0;
  display: flex;
  gap: 37px;
  height: 91px;
  padding: 23px 46px 0 20px;
  border: solid #808080;
  border-width: 2px 0 0 2px;
  background: #fff;
  font-size: 28px;
  line-height: 36px;
}
.panel a { color: #000080; text-decoration: none; }

/* bottom toolbar */
.bottombar {
  display: grid;
  grid-template-columns: 252fr 522fr 442fr 322fr 372fr 250fr;
  flex: none;
  height: 89px;
  padding-top: 4px;
  border-top: 1px solid #000;
  background: linear-gradient(#adbfea, #d5dff4 50%, #fff 96%);
}
.cell { display: flex; align-items: flex-start; justify-content: center; padding-top: 22px; border-right: 2px solid #808080; }
.cell:last-child { border-right: 0; }
.back { justify-content: flex-start; padding: 20px 0 0 52px; }
.finish { justify-content: flex-end; padding: 18px 50px 0 0; }
.nav text { fill: #eee; font: 400 26px "Open Sans", sans-serif; text-anchor: middle; }
.edit { gap: 32px; padding-left: 8px; }
.sw {
  width: 54px;
  height: 44px;
  border: 2px solid #f4f8ff;
  background: linear-gradient(#6a94cc 45%, #3a62ac 55%, #23489c);
  color: #fff;
  font: 600 20px/40px "Open Sans", sans-serif;
}
.turn { gap: 38px; padding-right: 4px; }
.view { padding-top: 18px; padding-right: 2px; }
.view text { font: 700 22px "Open Sans", sans-serif; text-anchor: middle; }
.on { fill: #5a3012; }
.view .off text { fill: #999; font-weight: 600; }
.floor { gap: 16px; padding: 32px 4px 0 0; }
.floor span { color: #4c4c50; font: 400 30px/26px "Open Sans", sans-serif; }
```
